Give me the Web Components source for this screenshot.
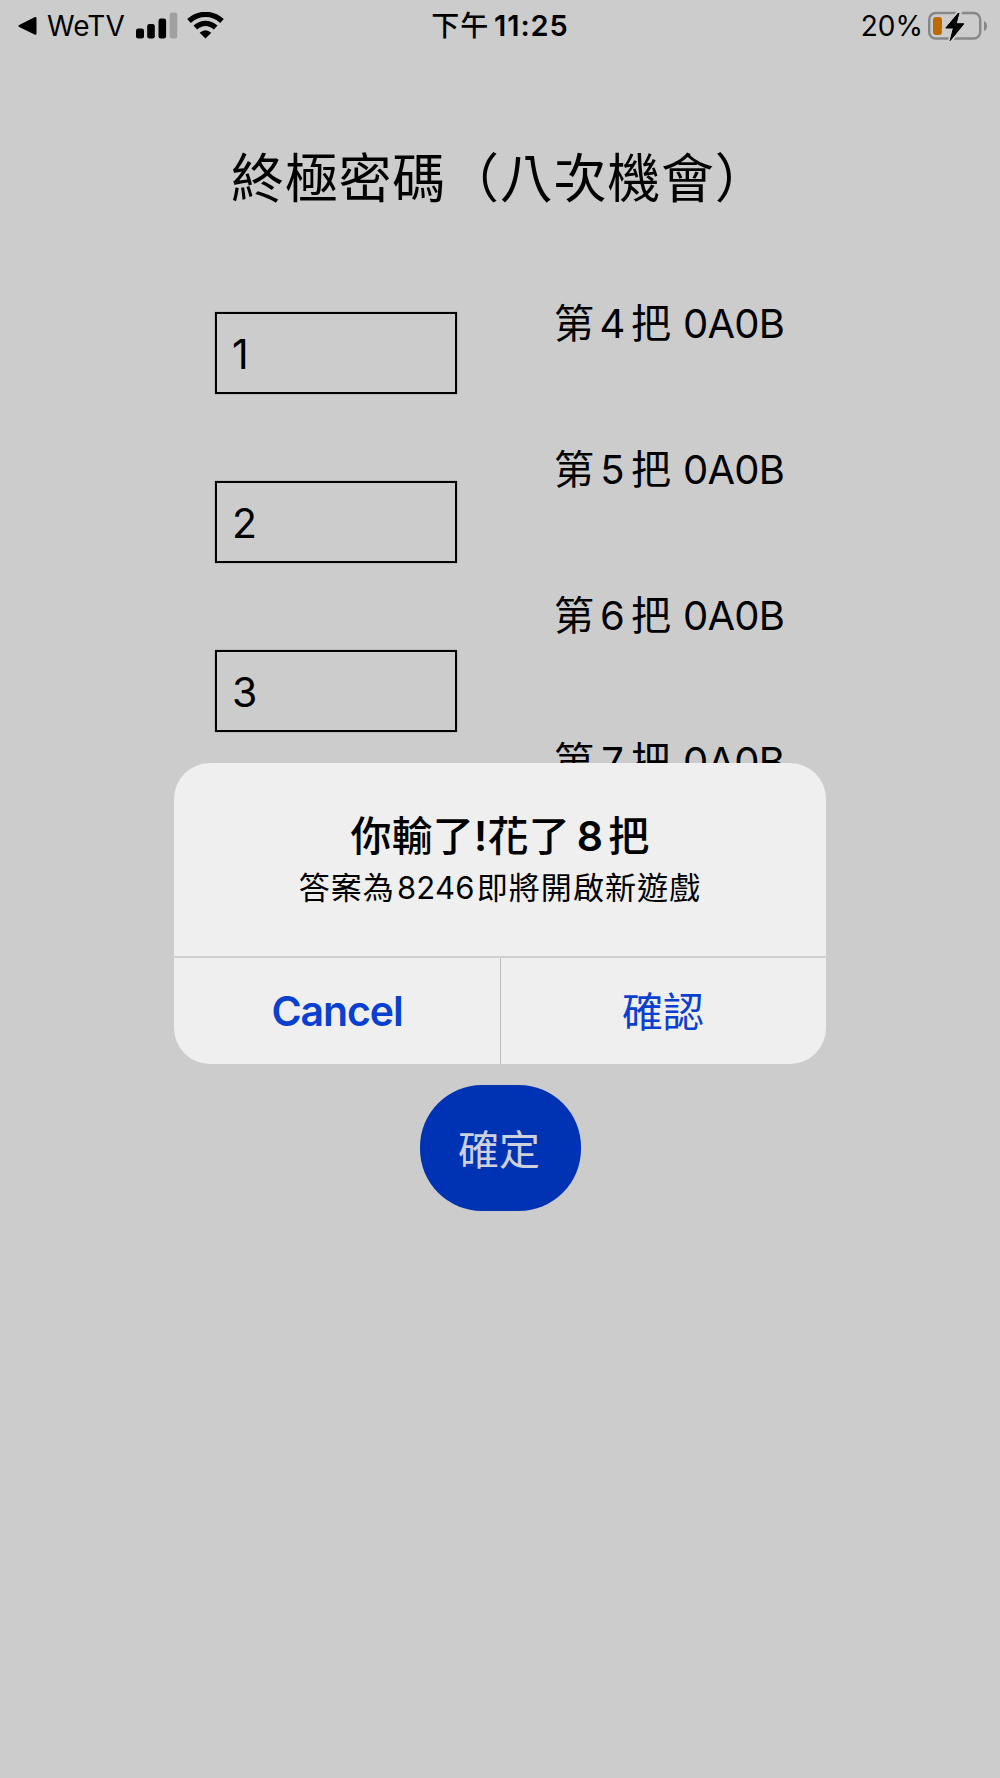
<!DOCTYPE html>
<html lang="zh-Hant">
<head>
    <meta charset="UTF-8">
    <title>終極密碼</title>
    <style>
        body {
            margin: 0;
            background: #ccc;
            color: #000;
            font-family: Inter, "Noto Sans CJK TC", sans-serif;
            font-size: 41px;
            text-spacing-trim: space-all;
        }
    </style>
</head>
<body>

<template id="status-template">
    <style>
        :host {
            display: grid;
            grid-template-columns: 1fr auto 1fr;
            align-items: center;
            height: 50px;
            padding: 0 13px 0 18px;
            font-size: 28px;
            line-height: 50px;
            white-space: nowrap;
        }
        div { display: flex; align-items: center; }
        svg { display: block; flex: none; }
        .app { width: 89px; margin-left: 10px; padding-top: 1px; }
        .wifi { margin-left: 9px; }
        .time { font-weight: 600; font-size: 29px; letter-spacing: .9px; padding: 1px 5px 0 0; }
        .time span { font-weight: 500; font-size: 28px; margin-right: 5px; }
        .right { justify-content: flex-end; }
        .right span { padding-top: 1px; }
        .right svg { margin-left: 5px; }
    </style>
    <div>
        <svg width="19" height="20" viewBox="0 0 19 20"><path d="M1.2 9 16.5 1.3Q18.5.4 18.5 2.3V17.5Q18.5 19.3 16.5 18.5L1.2 11Q-.4 10 1.2 9Z"/></svg>
        <span class="app"><slot name="app"></slot></span>
        <svg width="42" height="28" viewBox="0 0 42 28">
            <rect x="0" y="16.5" width="8" height="10" rx="2.3"/>
            <rect x="11.2" y="12" width="7.6" height="14.5" rx="2.3"/>
            <rect x="22.5" y="6.5" width="7.6" height="20" rx="2.3"/>
            <rect x="33.7" y=".5" width="7.6" height="26" rx="2.3" fill="#a0a0a0"/>
        </svg>
        <svg class="wifi" width="37" height="28" viewBox="0 0 37 28">
            <g fill="none" stroke="#000" stroke-width="5.4">
                <path d="M2 9Q9.5 2.4 18.5 2.4T35 9"/>
                <path d="M8.3 15.6Q13 11.4 18.5 11.4T28.7 15.6"/>
            </g>
            <path d="M12.7 20.7Q18.5 15.7 24.3 20.7L18.5 26.5Z"/>
        </svg>
    </div>
    <div class="time"><span><slot name="period"></slot></span><slot name="time"></slot></div>
    <div class="right">
        <span><slot name="battery"></slot></span>
        <svg width="59" height="32" viewBox="0 0 59 32">
            <rect x="1.2" y="3" width="51" height="25.5" rx="6.5" fill="none" stroke="#858789" stroke-width="2.4"/>
            <path d="M56 11Q59 12.5 59 16T56 21Z" fill="#858789"/>
            <rect x="5" y="7" width="9" height="18" rx="3" fill="#bd6a00"/>
            <path d="M30.5 3 17.8 18H25.5L22.2 30.5 35.8 13.8H28.2L31.5 3Z" fill="#000" stroke="#ccc" stroke-width="4.5" paint-order="stroke"/>
            <path d="M30.5 3 17.8 18H25.5L22.2 30.5 35.8 13.8H28.2Z" stroke="#000" stroke-linejoin="round"/>
        </svg>
    </div>
</template>

<template id="field-template">
    <style>
        :host {
            display: flex;
            align-items: center;
            box-sizing: border-box;
            width: 242px;
            height: 82px;
            padding: 1px 0 0 15px;
            border: 2px solid #000;
            box-shadow: 0 0 1px rgba(0, 0, 0, .5);
        }
    </style>
    <slot></slot>
</template>

<template id="result-template">
    <style>
        :host { display: block; height: 146px; line-height: 61px; font-size: 40px; white-space: nowrap; }
        .num { display: inline-block; width: 37px; text-align: center; }
        .score { margin-left: 12px; letter-spacing: -.8px; }
    </style>第<span class="num"><slot name="round"></slot></span>把<span class="score"><slot></slot></span>
</template>

<template id="game-template">
    <style>
        :host { display: block; }
        h1 {
            margin: 0;
            padding: 99px 0 0 231px;
            font-size: 53px;
            font-weight: 400;
            line-height: 60px;
            letter-spacing: .75px;
            white-space: nowrap;
        }
        .board {
            display: grid;
            grid-template-columns: 242px 1fr;
            column-gap: 97px;
            height: 791px;
            padding: 84px 0 0 215px;
            box-sizing: border-box;
        }
        .fields { display: flex; flex-direction: column; gap: 87px; padding-top: 19px; }
        button {
            display: block;
            width: 161px;
            height: 126px;
            margin: 85px auto 0;
            padding: 0 2px 3px 0;
            border: 0;
            border-radius: 62px;
            background: #0033b4;
            color: #ccd0df;
            font: inherit;
            font-size: 41px;
        }
    </style>
    <h1><slot name="title"></slot></h1>
    <div class="board">
        <div class="fields"><slot name="field"></slot></div>
        <div><slot name="result"></slot></div>
    </div>
    <button><slot name="submit"></slot></button>
</template>

<template id="alert-template">
    <style>
        :host {
            position: absolute;
            left: 174px;
            top: 763px;
            width: 652px;
            height: 301px;
            display: flex;
            flex-direction: column;
            border-radius: 36px;
            background: #efefef;
            overflow: hidden;
            text-align: center;
            white-space: nowrap;
        }
        .text { flex: 1; padding-top: 48px; }
        .title { font-weight: 500; line-height: 50px; letter-spacing: .2px; }
        .message { font-size: 31px; line-height: 54px; letter-spacing: 1.1px; }
        .actions {
            display: grid;
            grid-template-columns: 327px 1fr;
            height: 106px;
            border-top: 2px solid #cfcfcf;
            color: #0a40d0;
            line-height: 107px;
        }
        .cancel { font-weight: 600; letter-spacing: -1.1px; border-right: 1px solid #bdbdbd; }
        .ok { padding-right: 1px; line-height: 109px; }
    </style>
    <div class="text">
        <div class="title"><slot name="title"></slot></div>
        <div class="message"><slot name="message"></slot></div>
    </div>
    <div class="actions">
        <div class="cancel"><slot name="cancel"></slot></div>
        <div class="ok"><slot name="ok"></slot></div>
    </div>
</template>

<status-bar>
    <span slot="app">WeTV</span>
    <span slot="period">下午</span>
    <span slot="time">11:25</span>
    <span slot="battery">20%</span>
</status-bar>

<guess-game>
    <span slot="title">終極密碼（八次機會）</span>
    <guess-field slot="field">1</guess-field>
    <guess-field slot="field">2</guess-field>
    <guess-field slot="field">3</guess-field>
    <guess-result slot="result"><span slot="round">4</span>0A0B</guess-result>
    <guess-result slot="result"><span slot="round">5</span>0A0B</guess-result>
    <guess-result slot="result"><span slot="round">6</span>0A0B</guess-result>
    <guess-result slot="result"><span slot="round">7</span>0A0B</guess-result>
    <span slot="submit">確定</span>
</guess-game>

<alert-dialog role="alertdialog">
    <style>
        .b { font-weight: 600; }
        .n { margin: 0 5px 0 7px; }
        .m { margin: 0 2px; letter-spacing: .2px; }
    </style>
    <span slot="title">你輸了<span class="b">!</span>花了<span class="b n">8</span>把</span>
    <span slot="message">答案為<span class="m">8246</span>即將開啟新遊戲</span>
    <span slot="cancel">Cancel</span>
    <span slot="ok">確認</span>
</alert-dialog>

<script>
    function define(name, templateId) {
        customElements.define(name,
            class extends HTMLElement {
                constructor() {
                    super();
                    const template = document.getElementById(templateId).content;
                    this.attachShadow({mode: 'open'})
                        .appendChild(template.cloneNode(true));
                }
            });
    }

    define('status-bar', 'status-template');
    define('guess-field', 'field-template');
    define('guess-result', 'result-template');
    define('guess-game', 'game-template');
    define('alert-dialog', 'alert-template');
</script>
</body>
</html>
